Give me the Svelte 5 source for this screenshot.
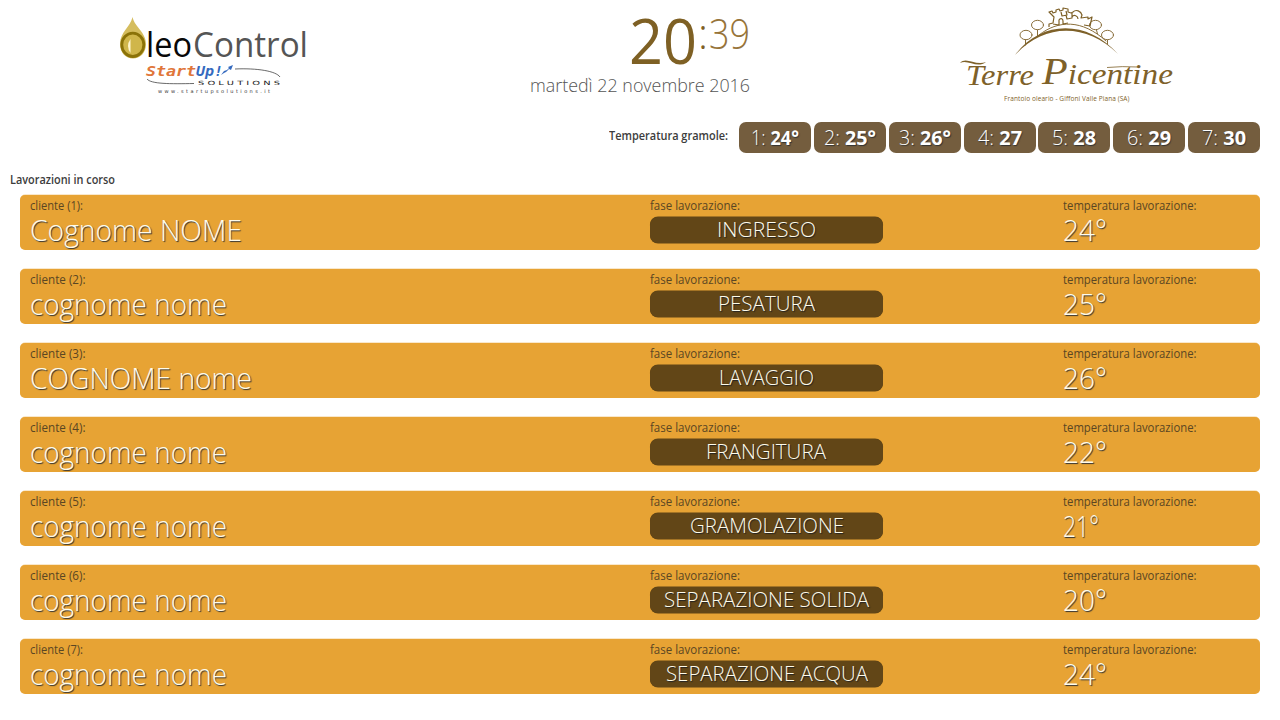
<script>
  const gramole = ['24°', '25°', '26°', '27', '28', '29', '30'];
  const lavorazioni = [
    { cliente: 'Cognome NOME', fase: 'INGRESSO', temp: '24°', nw: 211, fw: 99 },
    { cliente: 'cognome nome', fase: 'PESATURA', temp: '25°', nw: 196, fw: 97 },
    { cliente: 'COGNOME nome', fase: 'LAVAGGIO', temp: '26°', nw: 221, fw: 95 },
    { cliente: 'cognome nome', fase: 'FRANGITURA', temp: '22°', nw: 196, fw: 120 },
    { cliente: 'cognome nome', fase: 'GRAMOLAZIONE', temp: '21°', nw: 196, fw: 154 },
    { cliente: 'cognome nome', fase: 'SEPARAZIONE SOLIDA', temp: '20°', nw: 196, fw: 205 },
    { cliente: 'cognome nome', fase: 'SEPARAZIONE ACQUA', temp: '24°', nw: 196, fw: 202 }
  ];

  // Condenses a line of text so that it fills the given width.
  function fit(node, width) {
    node.style.display = 'inline-block';
    const natural = node.getBoundingClientRect().width;
    node.style.transformOrigin = 'left';
    node.style.transform = `scaleX(${(width / natural).toFixed(4)})`;
    node.style.marginRight = `${(width - natural).toFixed(2)}px`;
  }
</script>

<div class="page">
  <header>
    <svg class="oleo" width="210" height="100" viewBox="110 5 210 100">
      <path d="M132.500 17C130.500 27 120 32 120 44C120 53 126 58.500 133 58.500S146 53 146 44C146 32 134.500 27 132.500 17Z" fill="#d5bd5e" />
      <ellipse cx="132.800" cy="44.800" rx="11" ry="11.700" fill="#d0b64a" stroke="#8b7208" stroke-width="2.800" />
      <path d="M130.500 39Q125.500 46 130.500 53Z" fill="#fff6cf" />
      <text x="146" y="57" font-size="34.500" textLength="46" lengthAdjust="spacingAndGlyphs" fill="#080808">leo</text>
      <text x="193" y="57" font-size="34.500" textLength="115" lengthAdjust="spacingAndGlyphs" fill="#555">Control</text>
      <g class="startup" font-size="14.500">
        <text x="146" y="76" textLength="50" lengthAdjust="spacingAndGlyphs" fill="#e0763a">Start</text>
        <text x="196" y="76" textLength="27" lengthAdjust="spacingAndGlyphs" fill="#356abf">Up!</text>
      </g>
      <path d="M221 75l3-4 3-1 2-2-1-1 5-2-2 5-2-1-3 3-2 1z" fill="#356abf" />
      <path d="M235 69C257 68 276 71 280 77M147 79C151 84 170 84 194 83.500" fill="none" stroke="#444" stroke-width=".8" />
      <text class="wide" x="198" y="84.500" font-size="5.800" textLength="82" lengthAdjust="spacingAndGlyphs" fill="#222">S O L U T I O N S</text>
      <text class="wide" x="158" y="92.800" font-size="5" textLength="112" fill="#333">www.startupsolutions.it</text>
    </svg>

    <div class="clock">
      <div class="time"><span class="hours" use:fit={68}>20</span><span class="colon">:</span><span class="minutes" use:fit={41}>39</span></div>
      <div class="date"><span use:fit={220}>martedì 22 novembre 2016</span></div>
    </div>

    <svg class="terre" width="235" height="110" viewBox="950 0 235 110">
      <g fill="none" stroke="#8a6f3c" stroke-width="1" stroke-linecap="round" stroke-linejoin="round">
        <path d="M1039 35C1058 20 1082 19 1106 41" />
        <ellipse cx="1026" cy="35" rx="6" ry="4.700" />
        <ellipse cx="1037.500" cy="25" rx="6" ry="4.700" />
        <ellipse cx="1095.500" cy="25" rx="6" ry="4.700" />
        <ellipse cx="1107.500" cy="35" rx="6" ry="4.700" />
        <path d="M1025.500 40v5M1037.500 30v6M1096.500 30l1 4M1107.500 40v4" />
      </g>
      <g fill="none" stroke="#7e6129" stroke-width="1.200" stroke-linejoin="round">
        <path d="M1049 27v-3l4-1 1-6-5-5 3-1 1 2 3-1v-2l3-1 1 2 3-1v-2l5 1v3l3 1 2-1c3-3 8-1 9 3l-1 3 7-1v2l4-2-2 9-6-1M1053 24l6 1v-5c1-2 4-2 4 1v3l5-1M1061 12l1 4 5-1-1-4M1066 15l1 4 5-1v-5M1072 17c2-3 6-1 6 2" />
      </g>
      <path d="M1015 55C1041 20 1087 19 1118 54C1086 23 1045 23 1015 55Z" fill="#7e6129" />
      <path d="M960 63C966 56 975 66 986 62C977 69 968 59 960 63Z" fill="#7e6129" />
      <path d="M1107 67.500Q1122 66 1138 67" fill="none" stroke="#7e6129" stroke-width=".8" />
      <g class="script" fill="#7e6129">
        <text x="966" y="85" font-size="30" textLength="68" lengthAdjust="spacingAndGlyphs">Terre</text>
        <text x="1042" y="84" font-size="30" textLength="131" lengthAdjust="spacingAndGlyphs"><tspan font-size="38">P</tspan>icentine</text>
      </g>
      <text x="1004" y="101" font-size="6.500" textLength="125.500" fill="#7e6129">Frantoio oleario - Giffoni Valle Piana (SA)</text>
    </svg>
  </header>

  <section class="gramole">
    <span class="heading" use:fit={119}>Temperatura gramole:</span>
    <div class="tiles">
      {#each gramole as t, i}
        <div class="tile"><span use:fit={t.length === 3 ? (i === 0 ? 48 : 52) : 44}>{i + 1}: <b>{t}</b></span></div>
      {/each}
    </div>
  </section>

  <h2><span class="heading" use:fit={105}>Lavorazioni in corso</span></h2>

  <section class="list">
    {#each lavorazioni as l, i}
      <article>
        <div>
          <div class="label"><span use:fit={i === 0 || i === 6 ? 53 : 55.5}>cliente ({i + 1}):</span></div>
          <div class="value"><span use:fit={l.nw + 1}>{l.cliente}</span></div>
        </div>
        <div>
          <div class="label"><span use:fit={90}>fase lavorazione:</span></div>
          <div class="phase"><span use:fit={l.fw}>{l.fase}</span></div>
        </div>
        <div>
          <div class="label"><span use:fit={133.5}>temperatura lavorazione:</span></div>
          <div class="value"><span use:fit={l.temp === '21°' ? 36 : 44}>{l.temp}</span></div>
        </div>
      </article>
    {/each}
  </section>
</div>

<style>
  :global(body) { margin: 0; background: #fff; overflow: hidden; }
  .page { width: 1280px; height: 720px; box-sizing: border-box; overflow: hidden; font-family: 'Open Sans', 'Noto Sans', sans-serif; font-weight: 300; color: #333; white-space: nowrap; }
  header { display: grid; grid-template-columns: 520px 430px 330px; height: 122px; }
  svg { display: block; font-family: 'Open Sans', sans-serif; font-weight: 400; }
  .oleo { margin: 5px 0 0 110px; }
  .startup { font-family: 'DejaVu Sans Mono', monospace; font-weight: 700; font-style: italic; }
  .wide { font-family: 'DejaVu Sans', sans-serif; }
  .script { font-family: 'Liberation Serif', serif; font-style: italic; }
  .clock { width: 230px; text-align: right; }
  .time { display: flex; justify-content: flex-end; height: 74px; color: #7e6024; }
  .hours { font-size: 63px; line-height: 80px; font-weight: 400; }
  .colon { font-size: 42px; line-height: 66px; width: 12px; text-align: center; }
  .minutes { font-size: 42px; line-height: 66px; color: #97743a; }
  .date { font-size: 19px; line-height: 22px; color: #555; }
  .gramole { display: flex; justify-content: flex-end; padding-right: 20px; height: 31px; }
  .heading { font-size: 12.500px; font-weight: 600; color: #3c3c3c; }
  .gramole .heading { line-height: 28px; height: 28px; }
  .tiles { display: grid; grid-template-columns: repeat(7, 72px); column-gap: 2.830px; margin-left: 11px; }
  .tile { height: 31px; line-height: 32px; border-radius: 7px; background: #745d3e; color: #fff; text-align: center; font-size: 20px; text-shadow: 1px 1px 1px #333; }
  .tile b { font-weight: 700; }
  h2 { margin: 17px 0 5px 10px; height: 20px; line-height: 20px; font-size: 12.500px; }
  .list { display: grid; row-gap: 19px; padding: 0 20px; }
  article { height: 55px; border-radius: 5px; background: #e7a334; display: grid; grid-template-columns: 620px 413px 1fr; padding-left: 10px; box-sizing: border-box; box-shadow: 0 -.5px 0 #e7a33480; }
  .label { height: 22px; line-height: 22px; font-size: 12.500px; color: #5a4623; font-weight: 400; }
  .value { height: 33px; line-height: 26px; font-size: 29.500px; color: #fffbea; text-shadow: 1px 1px 1px #333; }
  .phase { width: 233px; height: 26px; line-height: 25px; border-radius: 8px; background: #624617; color: #fffbea; text-align: center; font-size: 21px; text-shadow: 1px 1px 1px #222; box-shadow: 0 .5px 0 #624617, 0 -.5px 0 #624617; }
</style>
